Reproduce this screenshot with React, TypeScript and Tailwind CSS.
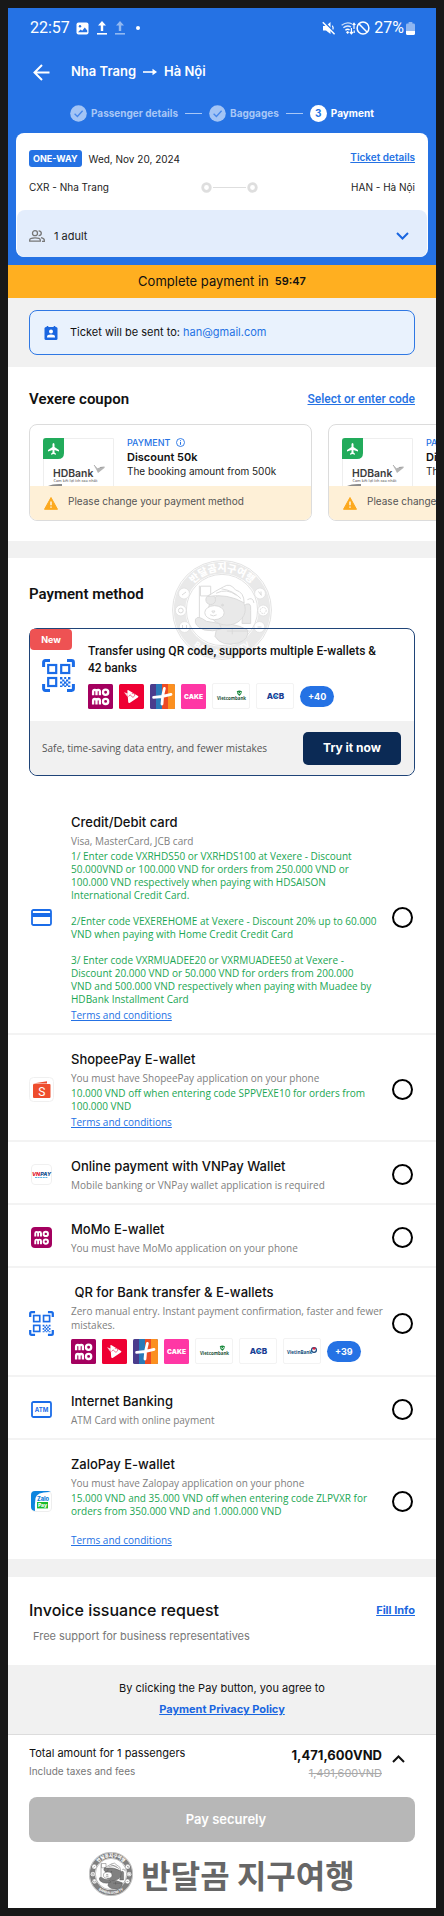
import React from "react";

function ImageIcon() {
  return (
    <svg className="h-[13px] w-[13px]" viewBox="0 0 13 13">
      <rect x="0.5" y="0.5" width="12" height="12" rx="2" fill="#fff" />
      <circle cx="4" cy="4.2" r="1.2" fill="#2572e4" />
      <path d="M2 10.2 4.6 7.4 6.2 8.8 8.8 5.6 11.2 8.6V10.2Z" fill="#2572e4" />
    </svg>
  );
}

function UploadIcon({ faded = false }: { faded?: boolean }) {
  return (
    <svg className={faded ? "h-[14px] w-[10px] opacity-50" : "h-[14px] w-[10px]"} viewBox="0 0 10 14">
      <path d="M5 0 9 4.4H6.2V10H3.8V4.4H1Z" fill="#fff" />
      <rect x="0" y="12" width="10" height="1.6" fill="#fff" />
    </svg>
  );
}

function MuteIcon() {
  return (
    <svg className="h-[14px] w-[14px]" viewBox="0 0 14 14">
      <path d="M1 5H4L8.5 1V13L4 9.4H1Z" fill="#fff" />
      <path d="M10.4 4.6 Q12 7 10.4 9.4" fill="none" stroke="#fff" strokeWidth="1.2" />
      <path d="M1.6 .4 13.4 12.4" stroke="#2572e4" strokeWidth="1.6" />
      <path d="M.8 1.2 12.6 13.2" stroke="#fff" strokeWidth="1.5" />
    </svg>
  );
}

function WifiIcon() {
  return (
    <svg className="h-[14px] w-[15px]" viewBox="0 0 15 14" fill="none" stroke="#fff">
      <path d="M.6 4.2Q6 .2 11 3" strokeWidth="1.4" opacity=".75" />
      <path d="M2.4 6.8Q6 3.8 10 6" strokeWidth="1.4" opacity=".85" />
      <path d="M4.4 9.2Q6.4 7.4 8.6 8.8" strokeWidth="1.4" />
      <circle cx="6.6" cy="11.4" r=".9" fill="#fff" />
      <path d="M10.4 7V12.4M8.8 11 10.4 12.8 12 11M13 8V2.4M11.6 4 13 2.2 14.4 4M13.2 9.5V12" strokeWidth="1.2" />
    </svg>
  );
}

function BlockIcon() {
  return (
    <svg className="h-[14px] w-[14px]" viewBox="0 0 14 14" fill="none" stroke="#fff" strokeWidth="1.5">
      <circle cx="7" cy="7" r="5.9" />
      <path d="M2.8 2.8 11.2 11.2" />
    </svg>
  );
}

function BatteryIcon() {
  return (
    <svg className="h-[13px] w-[9px]" viewBox="0 0 9 13">
      <rect x="2.6" y="0" width="3.8" height="2" rx=".6" fill="#8fb6f1" />
      <rect x="0" y="1.4" width="9" height="11.6" rx="1.4" fill="#8fb6f1" />
      <path d="M0 9H9V11.6Q9 13 7.6 13H1.4Q0 13 0 11.6Z" fill="#fff" />
    </svg>
  );
}

function DoneDot() {
  return (
    <svg className="h-[17px] w-[17px] shrink-0" viewBox="0 0 17 17">
      <circle cx="8.5" cy="8.5" r="8.3" fill="#a3c4f5" />
      <path d="M4.6 8.8 7.4 11.5 12.6 5.8" fill="none" stroke="#4787ea" strokeWidth="1.3" />
    </svg>
  );
}

function QrIcon({ className }: { className: string }) {
  return (
    <svg className={className} viewBox="0 0 33 33" fill="none" stroke="#1a6ce8">
      <path d="M1.6 8V3.4Q1.6 1.6 3.4 1.6H8M25 1.6H29.6Q31.4 1.6 31.4 3.4V8M31.4 25V29.6Q31.4 31.4 29.6 31.4H25M8 31.4H3.4Q1.6 31.4 1.6 29.6V25" strokeWidth="3" />
      <rect x="6.2" y="6" width="8" height="8" strokeWidth="2.2" />
      <rect x="19.2" y="6" width="8" height="8" strokeWidth="2.2" />
      <rect x="6.2" y="19" width="8" height="8" strokeWidth="2.2" />
      <path
        d="M18 18h2.4v2.4h-2.4zM22.2 18h2v2h-2zM26 18h2.4v2.4H26zM20.2 20.4h2.2v2.2h-2.2zM24 20.4h2.2v2.2H24zM18 22.4h2.2v2.2H18zM22 22.4h2.4v2.4H22zM26.2 22.4h2.2v2.2h-2.2zM20.2 24.6h2.2v2.2h-2.2zM24 24.6h2.2v2.2H24zM18 26.6h2.4V28H18zM22.2 26.6h2V28h-2zM26 26.6h2.4V28H26z"
        fill="#1a6ce8"
        stroke="none"
      />
    </svg>
  );
}

function MomoLogo({ className }: { className: string }) {
  return (
    <svg className={className} viewBox="0 0 25 25">
      <rect width="25" height="25" rx="1.5" fill="#a4005f" />
      <g fill="none" stroke="#fff" strokeWidth="2.3">
        <path d="M5.1 11.2V7.6Q5.1 5.8 6.8 5.8Q8.5 5.8 8.5 7.6V11.2M8.5 7.6Q8.5 5.8 10.2 5.8Q11.9 5.8 11.9 7.6V11.2" />
        <circle cx="17.6" cy="8.2" r="2.6" />
        <path d="M5.1 20.4V16.8Q5.1 15 6.8 15Q8.5 15 8.5 16.8V20.4M8.5 16.8Q8.5 15 10.2 15Q11.9 15 11.9 16.8V20.4" />
        <circle cx="17.6" cy="17.4" r="2.6" />
      </g>
    </svg>
  );
}

function ViettelLogo() {
  return (
    <svg className="h-[25px] w-[25px]" viewBox="0 0 25 25">
      <rect width="25" height="25" rx="1.5" fill="#ee0033" />
      <path d="M9.6 6.2 19 12Q20 12.8 18.8 13.6L11 18.8Q9.4 19.6 9.2 18L8.4 7.4Q8.2 5.4 9.6 6.2Z" fill="#fff" />
      <path d="M5 8.2 9 9.4 8.6 13Z" fill="#fff" opacity=".8" />
      <path d="M9.6 12.6Q11 9.6 12.2 11.6T14 13.4 16.2 10.6M12.8 9.6Q15 8.8 16 11" fill="none" stroke="#f2688a" strokeWidth=".9" />
    </svg>
  );
}

function PlusLogo() {
  return (
    <svg className="h-[25px] w-[25px]" viewBox="0 0 25 25">
      <rect width="25" height="25" rx="1.5" fill="#4a3c8c" />
      <rect x="6" width="7" height="25" fill="#2a7ab8" />
      <rect x="12" width="6" height="25" fill="#ee4a23" />
      <path d="M18 0H23.5Q25 0 25 1.5V23.5Q25 25 23.5 25H18Z" fill="#fb9020" />
      <path d="M14.4 4.4Q12.2 11 12 20M3.6 13.4Q12 13.2 21 10.4" fill="none" stroke="#fff" strokeWidth="2.8" strokeLinecap="round" />
    </svg>
  );
}

function CakeLogo() {
  return (
    <svg className="h-[25px] w-[25px]" viewBox="0 0 25 25">
      <rect width="25" height="25" rx="1.5" fill="#ff37a5" />
      <text x="12.5" y="15" textAnchor="middle" fontFamily="Inter" fontWeight="900" fontSize="6.6" fill="#fff">
        CAKE
      </text>
    </svg>
  );
}

const bankBox = "h-[26px] w-[38px] rounded-[2px] border border-[#f3f3f3] bg-white";

function VietcombankLogo() {
  return (
    <svg className={bankBox} viewBox="0 0 36 24">
      <text x="18.5" y="15.6" textAnchor="middle" fontFamily="Open Sans" fontWeight="700" fontSize="4.4" fill="#1d5138">
        Vietcombank
      </text>
      <path d="M23.8 7.2Q26.6 5.4 29 7.6Q28.6 10.4 26.4 12Q23.8 10.4 23.8 7.2Z" fill="#1c8a3f" />
      <path d="M25 8.2 26.4 10 28 8" fill="none" stroke="#fff" strokeWidth=".8" />
    </svg>
  );
}

function AcbLogo() {
  return (
    <svg className={bankBox} viewBox="0 0 36 24">
      <text x="18.5" y="15.4" textAnchor="middle" fontFamily="Inter" fontWeight="800" fontSize="8.2" fill="#1b3e93">
        ACB
      </text>
      <path d="M17.4 12.4H20" stroke="#29a4e0" strokeWidth="1.6" />
    </svg>
  );
}

function VietinLogo() {
  return (
    <svg className={bankBox} viewBox="0 0 36 24">
      <text x="15.6" y="15" textAnchor="middle" fontFamily="Open Sans" fontWeight="700" fontSize="4.6" fill="#14507c">
        VietinBank
      </text>
      <circle cx="30" cy="11" r="2.4" fill="#fff" stroke="#14457c" strokeWidth="1.2" />
      <path d="M28.4 9.2Q30 7.4 31.8 9.2L30 11.2Z" fill="#e3203c" />
    </svg>
  );
}

function Logos({ more, vietin = false }: { more: string; vietin?: boolean }) {
  return (
    <div className="flex items-center gap-[6px]">
      <MomoLogo className="h-[25px] w-[25px]" />
      <ViettelLogo />
      <PlusLogo />
      <CakeLogo />
      <VietcombankLogo />
      <AcbLogo />
      {vietin && <VietinLogo />}
      <button type="button" className="h-[21px] rounded-full bg-[#2572e4] px-2 text-[9px] font-bold leading-[21px] text-white">
        {more}
      </button>
    </div>
  );
}

function Mascot({ dark = false }: { dark?: boolean }) {
  const line = dark ? "#555" : "#dadada";
  const fill = dark ? "#808080" : "#e9e9e9";
  const id = dark ? "arc-dark" : "arc-light";
  return (
    <svg className="h-full w-full" viewBox="0 0 100 100">
      <circle cx="50" cy="50" r="49.4" fill="none" stroke={line} strokeWidth=".8" />
      <circle cx="50" cy="50" r="42.4" fill="none" stroke={fill} strokeWidth="11.6" />
      <circle cx="50" cy="50" r="35.6" fill="none" stroke={line} strokeWidth=".8" />
      <path id={id} d="M11.2 50A38.8 38.8 0 0 1 88.8 50" fill="none" />
      <path id={id + "-b"} d="M4.6 50A45.4 45.4 0 0 0 95.4 50" fill="none" />
      <text fontFamily="Noto Sans CJK KR" fontWeight="900" fontSize="10" fill="#fff" textAnchor="middle">
        <textPath href={"#" + id} startOffset="50%">반달곰지구여행</textPath>
      </text>
      <text fontFamily="Roboto" fontWeight="700" fontSize="8" fill="#fff" textAnchor="middle">
        <textPath href={"#" + id + "-b"} startOffset="50%">BANDALGOM TV</textPath>
      </text>
      <g fill="#fff" stroke={line} strokeWidth=".6">
        <circle cx="12" cy="33.5" r="5.4" />
        <circle cx="8.8" cy="50.5" r="5.4" />
        <circle cx="12.6" cy="67" r="5.4" />
        <circle cx="88" cy="33.5" r="5.4" />
        <circle cx="91.2" cy="50.5" r="5.4" />
        <circle cx="87.4" cy="67" r="5.4" />
      </g>
      <g fill="none" stroke={line}>
        <path d="M10 35 14 32M86.5 31.5 89.5 35.5M89 31.5V35" />
        <circle cx="8.8" cy="50.5" r="2.4" />
        <circle cx="91.2" cy="50.5" r="3" strokeDasharray="1.5 1" />
        <path d="M10.5 65V68.5H14.5V65M85.5 67H89.5" />
      </g>
      <g fill={fill} stroke={line} strokeWidth=".9" transform="translate(-4.5 -3.5) scale(1.08)">
        <path d="M29.5 27V62" />
        <path d="M30.5 27.5H40V36.5H30.5Z" fill="#fff" />
        <path d="M70 46Q78 40 77 50V62H69Z" />
        <path d="M46 64Q60 60 74 68Q76 76 66 80Q50 84 44 74Z" />
        <path d="M36 60Q28 54 26 58Q24 64 34 68Q42 70 50 67L48 62Z" />
        <ellipse cx="55" cy="49" rx="17" ry="14.5" />
        <circle cx="40" cy="40" r="4.5" />
        <path d="M37 37Q44 32 52 28Q58 24 63 31Q71 33 71 43Q56 34 37 37Z" fill="#fff" />
        <path d="M45 34Q55 29 64 36M50 30Q60 31 68 39" fill="none" />
        <ellipse cx="43.5" cy="52" rx="9" ry="6.5" fill="#fff" />
        <path d="M41 50.5H44L42.5 52.5ZM39.5 54Q42.5 56 45.5 54" fill="none" />
        <circle cx="51" cy="45" r=".9" fill={line} />
        <path d="M60 66V72M55 69H76M74 40Q79 37 80 43" fill="none" />
      </g>
    </svg>
  );
}

function Step({ children }: { children: React.ReactNode }) {
  return (
    <li className="flex items-center gap-1 text-[#a8c7f6]">
      <DoneDot />
      <span>{children}</span>
    </li>
  );
}

function HDBankThumb() {
  return (
    <svg className="h-[48px] w-[71px] shrink-0" viewBox="0 0 71 48">
      <path d="M.5 48V.5H70.5V48" fill="#fff" stroke="#eee" />
      <path d="M0 21V3Q0 0 3 0H21V15Q21 21 15 21Z" fill="#22ab5b" />
      <path d="M10.5 5Q11.5 5 11.5 6.5V9L16 12V13.4L11.5 12V14.6L13 15.8V16.8L10.5 16 8 16.8V15.8L9.5 14.6V12L5 13.4V12L9.5 9V6.5Q9.5 5 10.5 5Z" fill="#fff" />
      <text x="10" y="38.5" fontFamily="Inter" fontWeight="600" fontSize="10.4" fill="#3c3c3c">
        HDBank
      </text>
      <text x="10.5" y="44" fontFamily="Open Sans" fontSize="3.8" fontWeight="600" fill="#777">
        Cam kết lợi ích cao nhất
      </text>
      <path d="M51 28 54 30.5 58 29 62 29.5 55 35 53 31Z" fill="#b5b5b5" />
      <path d="M51 27 54 30.5M57 29.5 61.5 29" stroke="#999" strokeWidth=".8" />
      <path d="M5 48Q10 45.5 19 46V48Z" fill="#8b8b8b" />
    </svg>
  );
}

function Coupon() {
  return (
    <article className="w-[283px] shrink-0 overflow-hidden rounded-[8px] border border-[#dcdcdc] bg-white">
      <div className="flex gap-[13px] pl-[13px] pt-[13px]">
        <HDBankThumb />
        <div className="whitespace-nowrap">
          <p className="flex h-[9px] items-center gap-[6px] text-[9px] font-medium text-[#2572e4]">
            PAYMENT
            <svg className="h-[9px] w-[9px]" viewBox="0 0 9 9" fill="none" stroke="#2572e4">
              <circle cx="4.5" cy="4.5" r="4" strokeWidth=".9" />
              <path d="M4.5 4V6.8M4.5 2.2V3.2" />
            </svg>
          </p>
          <h3 className="mt-[3px] text-[11px] font-semibold leading-[14px]">Discount 50k</h3>
          <p className="text-[10px] leading-[15px] text-[#222]">The booking amount from 500k</p>
        </div>
      </div>
      <div className="flex h-[34px] items-center gap-[10px] bg-[#fef0d7] pl-[14px] text-[10px] text-[#555]">
        <svg className="h-[13px] w-[14px]" viewBox="0 0 14 13">
          <path d="M7 .5 13.5 12.3H.5Z" fill="#fca91f" stroke="#fca91f" strokeLinejoin="round" />
          <path d="M7 4.5V8.2M7 9.4V10.8" stroke="#fff" strokeWidth="1.3" />
        </svg>
        <span className="-mt-1 whitespace-nowrap">Please change your payment method</span>
      </div>
    </article>
  );
}

type MethodProps = {
  id: string;
  icon: React.ReactNode;
  title: string;
  sub: React.ReactNode;
  children?: React.ReactNode;
  last?: boolean;
};

function Method({ id, icon, title, sub, children, last = false }: MethodProps) {
  return (
    <li className={last ? "flex items-center pb-3 pl-[21px] pr-[23px] pt-[15px]" : "flex items-center border-b-2 border-[#f3f3f3] pb-[11px] pl-[21px] pr-[23px] pt-[15px]"}>
      <div className="flex w-[25px] shrink-0 justify-center">{icon}</div>
      <div className="ml-[17px] min-w-0 flex-1">
        <label htmlFor={id} className="block whitespace-pre text-[13px] font-medium leading-[18px] text-[#111]">
          {title}
        </label>
        <p className="mt-[3px] whitespace-nowrap font-['Open_Sans',sans-serif] text-[10px] leading-[14px] text-[#808080]">{sub}</p>
        {children}
      </div>
      <input id={id} type="radio" name="method" className="h-[21px] w-[21px] shrink-0 appearance-none rounded-full border-2 border-black bg-white" />
    </li>
  );
}

const offer = "whitespace-nowrap font-['Open_Sans',sans-serif] text-[10px] leading-[13px] text-[#1aa653]";
const terms = "block w-fit font-['Open_Sans',sans-serif] text-[10px] leading-[14px] text-[#2572e4] underline";

export default function App() {
  return (
    <div className="bg-[#181818] p-2 font-['Inter','Noto_Sans_CJK_KR',sans-serif] text-[#111]">
      <div className="overflow-hidden bg-white">
        <header className="bg-[#2572e4] px-2 pb-2 text-white">
          <div className="flex h-[40px] items-center justify-between pl-[14px] pr-[13px] font-['Roboto',sans-serif]">
            <div className="flex items-center">
              <span className="text-[16px]">22:57</span>
              <div className="ml-[6px] flex items-center gap-[8px]">
                <ImageIcon />
                <UploadIcon />
                <UploadIcon faded />
              </div>
              <span className="ml-[11px] h-1 w-1 rounded-full bg-white" />
            </div>
            <div className="flex items-center">
              <MuteIcon />
              <span className="ml-[5px]"><WifiIcon /></span>
              <BlockIcon />
              <span className="ml-[4px] mr-[2px] text-[16px]">27%</span>
              <BatteryIcon />
            </div>
          </div>
          <div className="flex h-[48px] items-center pl-[17px]">
            <button type="button" aria-label="Back" className="mr-[21px]">
              <svg className="h-[17px] w-[17px]" viewBox="0 0 17 17" fill="none" stroke="#fff" strokeWidth="2">
                <path d="M16.5 8.5H1.5M9 1 1.5 8.5 9 16" />
              </svg>
            </button>
            <h1 className="flex items-center gap-[7px] text-[13px] font-semibold">
              <span>Nha Trang</span>
              <svg className="h-[8px] w-[14px]" viewBox="0 0 14 8">
                <path d="M0 4H11" stroke="#fff" strokeWidth="1.6" />
                <path d="M9.5 .8 14 4 9.5 7.2Z" fill="#fff" />
              </svg>
              <span>Hà Nội</span>
            </h1>
          </div>
          <ol className="flex h-[34px] items-center gap-[7px] pl-[54px] text-[10px] font-bold">
            <Step>Passenger details</Step>
            <li aria-hidden="true" className="h-px w-[17px] bg-[#a8c7f6]" />
            <Step>Baggages</Step>
            <li aria-hidden="true" className="h-px w-[17px] bg-[#a8c7f6]" />
            <li className="flex items-center gap-1">
              <span className="flex h-[17px] w-[17px] items-center justify-center rounded-full bg-white text-[#2572e4]">3</span>
              <span>Payment</span>
            </li>
          </ol>
          <section className="mt-[3px] rounded-[8px] bg-white text-[#222]">
            <div className="h-[77px] px-[13px] pt-[17px]">
              <div className="flex items-start">
                <span className="rounded-[3px] bg-[#2572e4] px-1 text-[9px] font-bold leading-[17px] text-white">ONE-WAY</span>
                <span className="ml-[7px] text-[10px] leading-[18px]">Wed, Nov 20, 2024</span>
                <a href="#ticket" className="ml-auto text-[10px] font-semibold leading-[14px] text-[#2572e4] underline">Ticket details</a>
              </div>
              <div className="mt-[11px] flex items-center text-[10px] leading-[16px]">
                <span className="flex-1">CXR - Nha Trang</span>
                <svg className="ml-[14px] h-[11px] w-[57px]" viewBox="0 0 57 11" fill="none" stroke="#dedede">
                  <circle cx="5.5" cy="5.5" r="3.8" strokeWidth="2.8" />
                  <circle cx="51.5" cy="5.5" r="3.8" strokeWidth="2.8" />
                  <path d="M12 5.5H45" />
                </svg>
                <span className="flex-1 text-right">HAN - Hà Nội</span>
              </div>
            </div>
            <div className="mx-px flex h-[47px] items-center rounded-[8px] bg-[#e3edfc] pl-[12px] pr-[18px] pt-[5px]">
              <svg className="h-[12px] w-[16px]" viewBox="0 0 16 12" fill="none" stroke="#777" strokeWidth="1.3">
                <circle cx="6" cy="3.2" r="2.5" />
                <path d="M.7 11.2V10Q.7 7.8 6 7.8T11.3 10V11.2Z" />
                <path d="M9.6 .8Q12.3 1 12.3 3.2T9.6 5.7M12 7.6Q15.3 8.4 15.3 10V11.4H13" />
              </svg>
              <span className="ml-[9px] text-[11px]">1 adult</span>
              <button type="button" aria-label="Show passengers" className="ml-auto">
                <svg className="h-[8px] w-[13px]" viewBox="0 0 13 8" fill="none" stroke="#1a66e0" strokeWidth="2">
                  <path d="M1 1 6.5 6.5 12 1" />
                </svg>
              </button>
            </div>
          </section>
        </header>

        <div className="flex h-[33px] items-center justify-center gap-[6px] bg-[#ffaf20]">
          <span className="text-[13px]">Complete payment in</span>
          <span className="text-[11px] font-semibold">59:47</span>
        </div>

        <div className="bg-[#f1f1f1] px-[21px] pb-3 pt-3">
          <div className="flex h-[45px] items-center rounded-[8px] border border-[#2f78e4] bg-[#e9f2fd] pl-[14px] text-[11px]">
            <svg className="h-[14px] w-[14px]" viewBox="0 0 14 14">
              <rect x=".5" y="1" width="13" height="13" rx="1.5" fill="#1a66e0" />
              <path d="M3.5 0V2M10.5 0V2" stroke="#1a66e0" strokeWidth="1.6" />
              <circle cx="7" cy="5.6" r="2" fill="#fff" />
              <path d="M3 11.4V10.6Q3 8.6 7 8.6T11 10.6V11.4Z" fill="#fff" />
            </svg>
            <span className="ml-[12px]">
              Ticket will be sent to: <a href="mailto:han@gmail.com" className="text-[#2572e4]">han@gmail.com</a>
            </span>
          </div>
        </div>

        <section className="border-b-[17px] border-[#f1f1f1] pb-5 pl-[21px] pt-5">
          <div className="flex items-center justify-between pr-[21px] font-['Roboto',sans-serif] leading-6">
            <h2 className="text-[15px] font-semibold">Vexere coupon</h2>
            <a href="#coupons" className="text-[12px] font-medium text-[#2572e4] underline">Select or enter code</a>
          </div>
          <div className="mt-[13px] flex gap-4 overflow-hidden">
            <Coupon />
            <Coupon />
          </div>
        </section>

        <section className="relative">
          <div aria-hidden="true" className="pointer-events-none absolute left-1/2 top-[2px] h-[100px] w-[100px] -translate-x-1/2">
            <Mascot />
          </div>
          <h2 className="px-[21px] pt-6 font-['Roboto',sans-serif] text-[15px] font-semibold leading-6">Payment method</h2>
          <div className="relative mx-[21px] mt-[22px] rounded-[8px] border border-[#1f4478]">
            <span className="absolute left-0 top-0 h-[21px] w-[42px] rounded-[4px] bg-[#ee5253] text-center text-[9px] font-bold leading-[21px] text-white">New</span>
            <div className="flex h-[92px] pl-[12px]">
              <QrIcon className="mt-[30px] h-[33px] w-[33px] shrink-0" />
              <div className="ml-[13px] pt-[14px]">
                <p className="mb-[6px] font-['Roboto',sans-serif] text-[12px] font-medium leading-[17px]">
                  Transfer using QR code, supports multiple E-wallets &amp;<br />42 banks
                </p>
                <Logos more="+40" />
              </div>
            </div>
            <div className="flex h-[54px] items-center justify-between rounded-b-[8px] bg-[#f1f1f1] pl-[12px] pr-[13px]">
              <span className="font-['Open_Sans',sans-serif] text-[10px] text-[#555]">Safe, time-saving data entry, and fewer mistakes</span>
              <button type="button" className="h-[33px] w-[98px] rounded-[5px] bg-[#0b2a55] text-[12px] font-bold text-white">Try it now</button>
            </div>
          </div>
        </section>

        <ul className="mt-[22px]">
          <Method
            id="card"
            title="Credit/Debit card"
            sub="Visa, MasterCard, JCB card"
            icon={
              <svg className="h-[17px] w-[21px]" viewBox="0 0 21 17">
                <rect x="1" y="1" width="19" height="15" rx="1.5" fill="#fff" stroke="#1a6ce8" strokeWidth="1.8" />
                <rect x="1" y="4" width="19" height="4" fill="#1a6ce8" />
              </svg>
            }
          >
            <div className="mb-[2px] mt-[2px] flex flex-col gap-[13px]">
              <p className={offer}>
                1/ Enter code VXRHDS50 or VXRHDS100 at Vexere - Discount<br />
                50.000VND or 100.000 VND for orders from 250.000 VND or<br />
                100.000 VND respectively when paying with HDSAISON<br />
                International Credit Card.
              </p>
              <p className={offer}>
                2/Enter code VEXEREHOME at Vexere - Discount 20% up to 60.000<br />
                VND when paying with Home Credit Credit Card
              </p>
              <p className={offer}>
                3/ Enter code VXRMUADEE20 or VXRMUADEE50 at Vexere -<br />
                Discount 20.000 VND or 50.000 VND for orders from 200.000<br />
                VND and 500.000 VND respectively when paying with Muadee by<br />
                HDBank Installment Card
              </p>
            </div>
            <a href="#card-terms" className={terms}>Terms and conditions</a>
          </Method>

          <Method
            id="shopee"
            title="ShopeePay E-wallet"
            sub="You must have ShopeePay application on your phone"
            icon={
              <svg className="h-[25px] w-[25px]" viewBox="0 0 25 25">
                <rect x=".5" y=".5" width="24" height="24" rx="4" fill="#fff" stroke="#f0f0f0" />
                <path d="M4 6.5 18 4.2V6.5Z" fill="#ee4d2d" />
                <rect x="4" y="7" width="17.5" height="14" rx="1" fill="#ee4d2d" />
                <text x="12.7" y="18.6" textAnchor="middle" fontFamily="Roboto" fontSize="12" fill="#fff">S</text>
              </svg>
            }
          >
            <p className={"my-[2px] " + offer}>
              10.000 VND off when entering code SPPVEXE10 for orders from<br />100.000 VND
            </p>
            <a href="#shopee-terms" className={terms}>Terms and conditions</a>
          </Method>

          <Method
            id="vnpay"
            title="Online payment with VNPay Wallet"
            sub="Mobile banking or VNPay wallet application is required"
            icon={
              <svg className="h-[21px] w-[21px]" viewBox="0 0 21 21">
                <rect x=".5" y=".5" width="20" height="20" rx="3.5" fill="#fff" stroke="#f0f0f0" />
                <text x="10.5" y="12" textAnchor="middle" fontFamily="Inter" fontWeight="800" fontStyle="italic" fontSize="5.4">
                  <tspan fill="#e02030">VN</tspan><tspan fill="#14508e">PAY</tspan>
                </text>
                <path d="M4 13.5H17" stroke="#5cb6e6" strokeDasharray="2 .6" />
              </svg>
            }
          />

          <Method
            id="momo"
            title="MoMo E-wallet"
            sub="You must have MoMo application on your phone"
            icon={<MomoLogo className="h-[21px] w-[21px] rounded-[4px]" />}
          />

          <Method
            id="qr"
            title=" QR for Bank transfer & E-wallets"
            sub={<>Zero manual entry. Instant payment confirmation, faster and fewer<br />mistakes.</>}
            icon={<QrIcon className="h-[25px] w-[25px]" />}
          >
            <div className="mt-[6px]">
              <Logos more="+39" vietin />
            </div>
          </Method>

          <Method
            id="atm"
            title="Internet Banking"
            sub="ATM Card with online payment"
            icon={
              <svg className="h-[17px] w-[21px]" viewBox="0 0 21 17">
                <rect x="1" y="1" width="19" height="15" rx="1.5" fill="#fff" stroke="#1a6ce8" strokeWidth="1.8" />
                <text x="10.5" y="10.6" textAnchor="middle" fontFamily="Inter" fontWeight="700" fontSize="6" fill="#1a6ce8">ATM</text>
              </svg>
            }
          />

          <Method
            id="zalo"
            title="ZaloPay E-wallet"
            sub="You must have Zalopay application on your phone"
            last
            icon={
              <svg className="h-[21px] w-[21px]" viewBox="0 0 21 21">
                <rect x=".5" y=".5" width="20" height="20" rx="3.5" fill="#fff" stroke="#eee" />
                <path d="M4 0H17L20 1Q6 .5 4.5 7Q3.5 14 4 20Q0 19.5 0 16V4Q0 0 4 0Z" fill="#0d84de" />
                <text x="12" y="9.6" textAnchor="middle" fontFamily="Inter" fontWeight="800" fontSize="5.6" fill="#1280d6">Zalo</text>
                <rect x="6" y="11" width="11" height="6.4" fill="#18bb2c" />
                <text x="11.5" y="15.8" textAnchor="middle" fontFamily="Inter" fontWeight="800" fontSize="5" fill="#fff">Pay</text>
              </svg>
            }
          >
            <p className={"mb-[15px] mt-[2px] " + offer}>
              15.000 VND and 35.000 VND off when entering code ZLPVXR for<br />orders from 350.000 VND and 1.000.000 VND
            </p>
            <a href="#zalo-terms" className={terms}>Terms and conditions</a>
          </Method>
        </ul>

        <section className="border-t-[18px] border-[#f1f1f1] px-[21px] pb-5 pt-[21px]">
          <div className="flex items-center justify-between leading-6">
            <h2 className="text-[16px] font-medium">Invoice issuance request</h2>
            <a href="#invoice" className="text-[11px] font-bold text-[#1a66e0] underline">Fill Info</a>
          </div>
          <p className="mt-[5px] pl-1 text-[11px] leading-[18px] text-[#777]">Free support for business representatives</p>
        </section>

        <div className="border-b border-[#dcdcdc] bg-[#f1f1f1] pb-4 pt-[14px] text-center text-[11px] leading-[18px]">
          <p>By clicking the Pay button, you agree to</p>
          <a href="#privacy" className="mx-auto mt-[3px] block w-fit font-bold text-[#1a66e0] underline">Payment Privacy Policy</a>
        </div>

        <footer className="px-[21px] pb-3 pt-[9px]">
          <div className="flex h-[53px]">
            <div>
              <p className="text-[11px] leading-[18px]">Total amount for 1 passengers</p>
              <p className="mt-[2px] text-[10px] leading-[14px] text-[#777]">Include taxes and fees</p>
            </div>
            <div className="ml-auto pt-[2px] text-right">
              <p className="text-[13px] font-bold leading-[18px]">1,471,600VND</p>
              <p className="text-[11px] leading-[18px] text-[#aaa] line-through">1,491,600VND</p>
            </div>
            <button type="button" aria-label="Show price details" className="ml-[10px] mr-[10px] h-[30px]">
              <svg className="h-[8px] w-[13px]" viewBox="0 0 13 8" fill="none" stroke="#111" strokeWidth="2">
                <path d="M1 7 6.5 1.5 12 7" />
              </svg>
            </button>
          </div>
          <button type="button" className="h-[45px] w-full rounded-[8px] bg-[#b7b7b7] pl-2 text-[13px] font-semibold text-white">Pay securely</button>
          <div className="mt-[10px] flex h-[44px] items-center justify-center gap-[8px]">
            <div className="h-[44px] w-[44px]"><Mascot dark /></div>
            <span className="whitespace-nowrap font-['Noto_Sans_CJK_KR',sans-serif] text-[32px] font-bold leading-[44px] text-[#666]">반달곰 지구여행</span>
          </div>
        </footer>
      </div>
    </div>
  );
}
